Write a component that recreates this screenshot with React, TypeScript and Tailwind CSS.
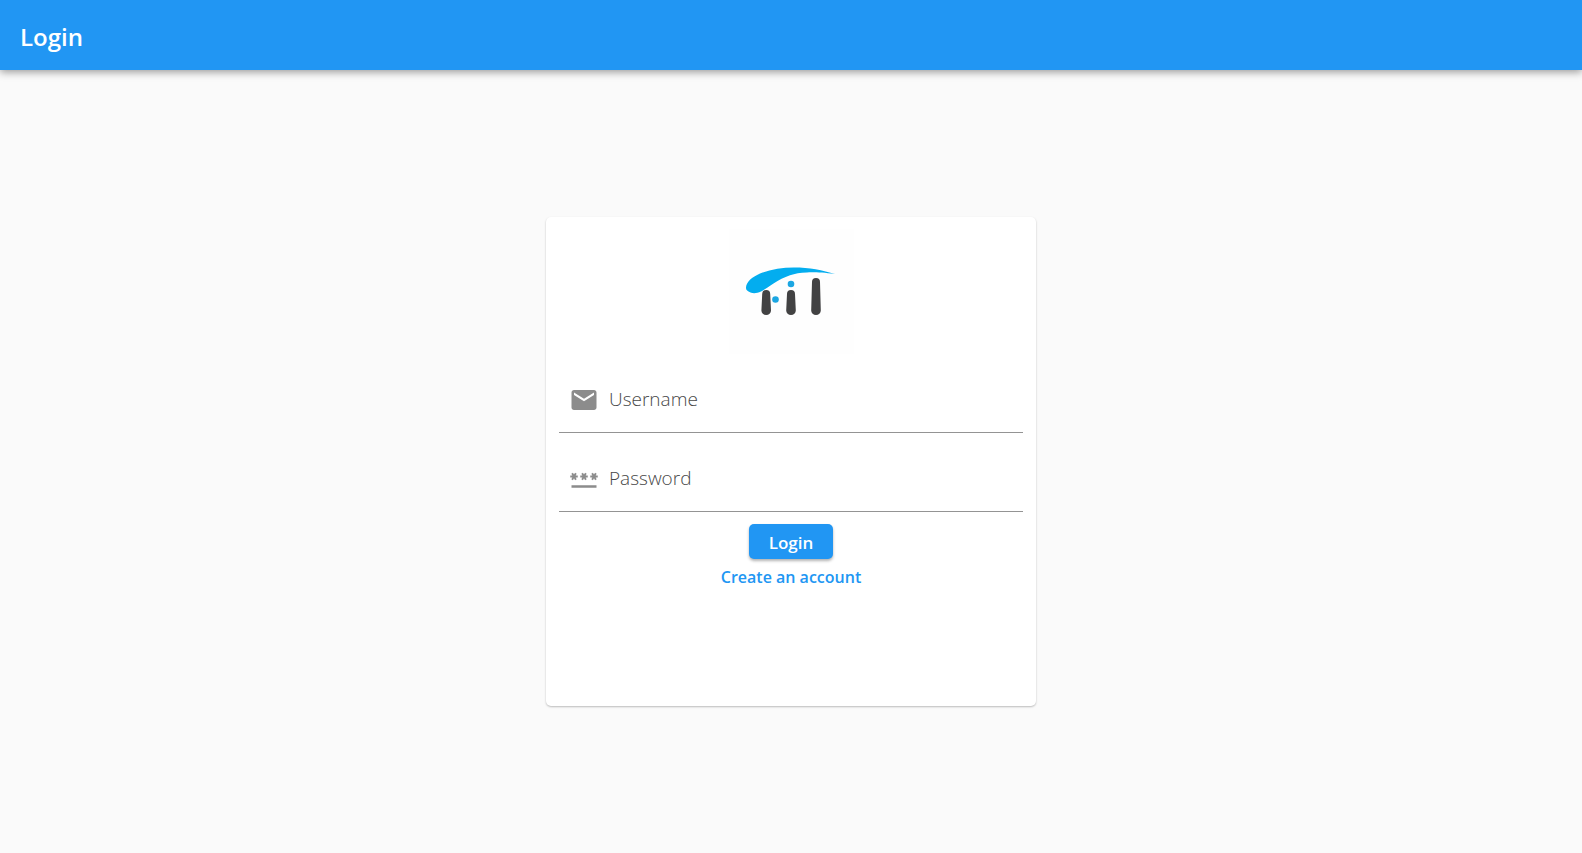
import type { ReactNode } from "react";
import { MdEmail, MdPassword } from "react-icons/md";

function Logo() {
  return (
    <svg viewBox="0 0 125 125" className="size-[125px] bg-[#fefefe]" role="img" aria-label="Company logo">
      <path
        d="M17 59 C17 53 23 48 31 44.5 C41 40.5 53 38.4 65 38.4 C80 38.4 94 41 106 45 C94 43.6 87 43.2 78 43.4 C71 43.6 66 44.5 61 46.3 C55 48.4 50 51 44.5 54.5 C40 57.3 36 60.5 32 62.5 C28 64.4 24 64.6 21.5 63.4 C18.5 62.3 17 61 17 59 Z"
        fill="#03adef"
      />
      <circle cx="62" cy="55" r="3.3" fill="#1ba6e2" />
      <circle cx="46.5" cy="70.5" r="3.3" fill="#1ba6e2" />
      <g fill="#424243">
        <path d="M33.2 65 a4 4 0 0 1 8 0 L42 81.5 a4.8 4.6 0 0 1 -9.6 0 Z" />
        <path d="M58 65 a4 4 0 0 1 8 0 L66.8 81.5 a4.8 4.6 0 0 1 -9.6 0 Z" />
        <path d="M83 53 a4 4 0 0 1 8 0 L91.8 81.5 a4.8 4.6 0 0 1 -9.6 0 Z" />
      </g>
    </svg>
  );
}

type FieldProps = { id: string; type: string; label: string; icon: ReactNode };

function Field({ id, type, label, icon }: FieldProps) {
  return (
    <div className="flex h-[79px] w-full items-center gap-2.5 border-b border-[#949494] px-2.5 pt-3.5">
      <label htmlFor={id} aria-label={label} className="shrink-0 text-[#8c8c8c]">
        {icon}
      </label>
      <input
        id={id}
        type={type}
        placeholder={label}
        className="min-w-0 flex-1 bg-transparent pb-0.5 text-[19px] leading-7 font-light text-[#333] outline-none placeholder:text-[#484848]"
      />
    </div>
  );
}

export default function App() {
  return (
    <div className="flex min-h-screen flex-col bg-[#fafafa] font-['Open_Sans','Noto_Sans',sans-serif]">
      <header className="z-10 flex h-[70px] items-center bg-[#2196f3] px-5 pt-1 shadow-[0_2px_8px_rgba(0,0,0,0.4)]">
        <h1 className="text-2xl font-semibold text-white">Login</h1>
      </header>
      <main className="flex flex-1 items-center justify-center p-4">
        <form
          className="flex min-h-[489px] w-full max-w-[490px] flex-col items-center rounded-[5px] bg-white px-[13px] py-3 shadow-[0_1px_2px_rgba(0,0,0,0.25)]"
          onSubmit={(e) => e.preventDefault()}
        >
          <Logo />
          <Field id="username" type="text" label="Username" icon={<MdEmail className="size-[30px]" />} />
          <Field id="password" type="password" label="Password" icon={<MdPassword className="size-[30px]" />} />
          <button
            type="submit"
            className="mt-3 h-[35px] rounded-[5px] bg-[#2196f3] px-5 pt-0.5 text-[17px] font-semibold text-white shadow-[0_2px_3px_rgba(0,0,0,0.3)]"
          >
            Login
          </button>
          <a href="#register" className="mt-1.5 text-base leading-6 font-semibold text-[#2196f3]">
            Create an account
          </a>
        </form>
      </main>
    </div>
  );
}
